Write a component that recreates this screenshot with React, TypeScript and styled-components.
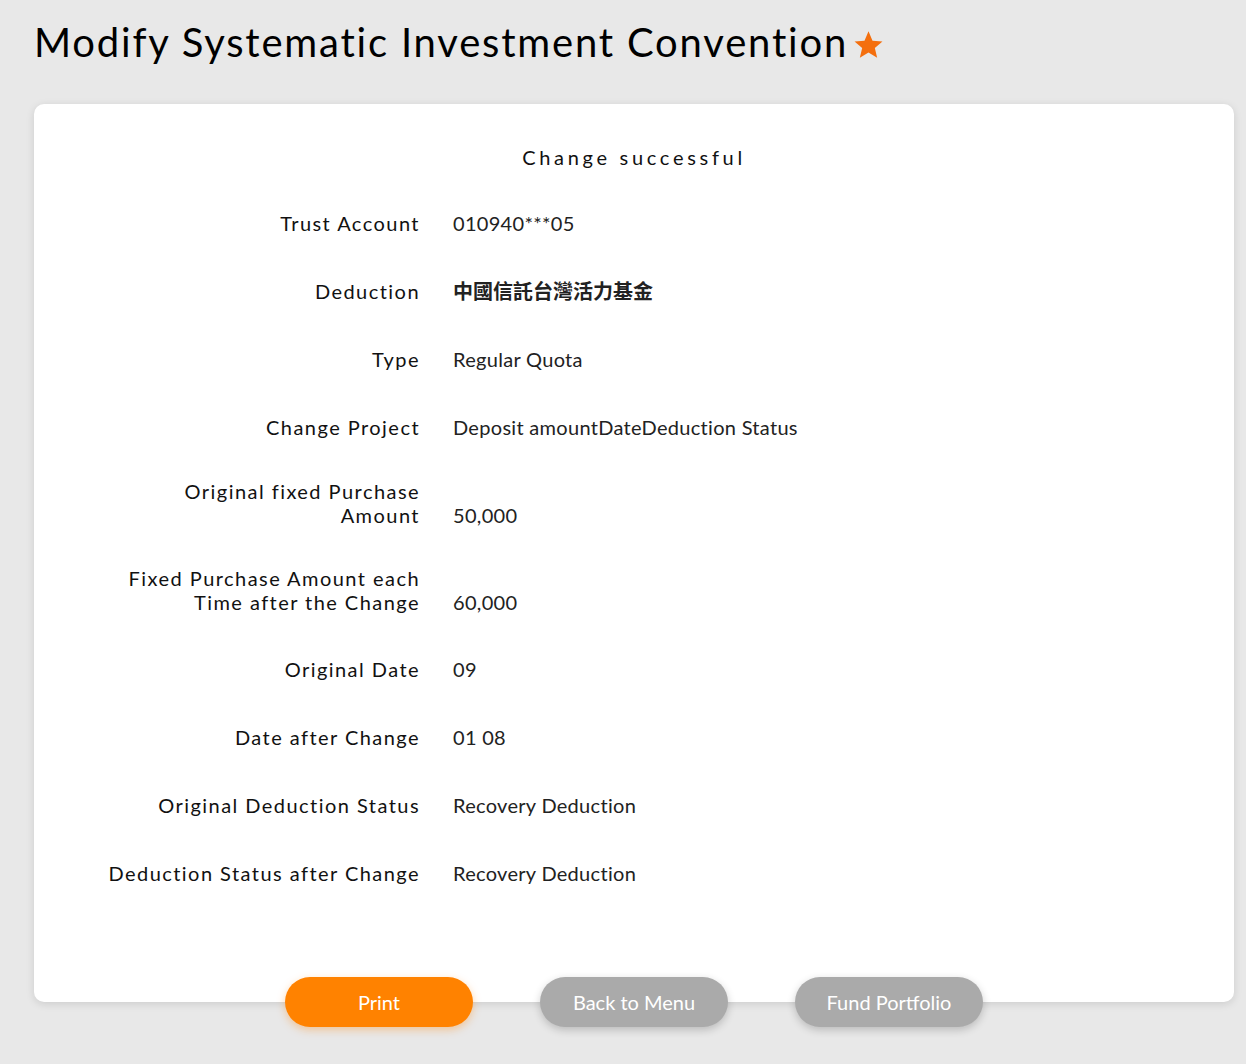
import React from 'react'
import styled, { createGlobalStyle } from 'styled-components'

const GlobalStyle = createGlobalStyle`
  html, body {
    margin: 0;
    padding: 0;
    background: #e8e8e8;
  }
  body {
    font-family: Lato, "Noto Sans CJK TC", sans-serif;
    color: #111;
  }
`

const rows: { label: React.ReactNode; value: React.ReactNode; cjk?: boolean; wrap?: boolean }[] = [
  { label: 'Trust Account', value: '010940***05' },
  { label: 'Deduction', value: '中國信託台灣活力基金', cjk: true },
  { label: 'Type', value: 'Regular Quota' },
  { label: 'Change Project', value: 'Deposit amountDateDeduction Status' },
  { label: <>Original fixed Purchase<br />Amount</>, value: '50,000', wrap: true },
  { label: <>Fixed Purchase Amount each<br />Time after the Change</>, value: '60,000', wrap: true },
  { label: 'Original Date', value: '09' },
  { label: 'Date after Change', value: '01 08' },
  { label: 'Original Deduction Status', value: 'Recovery Deduction' },
  { label: 'Deduction Status after Change', value: 'Recovery Deduction' },
]

const App = () => {
  return (
    <Page>
      <GlobalStyle />
      <Title>
        Modify Systematic Investment Convention
        <Star viewBox='0 0 24 24'>
          <path d='M12 1.8l3.1 7.2 7.7.6-5.9 5.1 1.8 7.6L12 18.2l-6.7 4.1 1.8-7.6-5.9-5.1 7.7-.6z' />
        </Star>
      </Title>

      <Card>
        <Status>Change successful</Status>
        <Table>
          {rows.map((row, i) => (
            <Row key={i} $wrap={row.wrap}>
              <Label $wrap={row.wrap}>{row.label}</Label>
              <Value $cjk={row.cjk} $wrap={row.wrap}>{row.value}</Value>
            </Row>
          ))}
        </Table>
        <Actions>
          <Button $variant='primary'>Print</Button>
          <Button>Back to Menu</Button>
          <Button>Fund Portfolio</Button>
        </Actions>
      </Card>
    </Page>
  )
}

const Page = styled.div`
  padding: 16px 12px 40px 34px;
`

const Title = styled.h1`
  margin: 0 0 36px;
  display: flex;
  align-items: center;
  font-size: 40px;
  font-weight: 400;
  line-height: 52px;
  color: #000;
  letter-spacing: 1.8px;
`

const Star = styled.svg`
  width: 31px;
  height: 31px;
  fill: #f46f0e;
  margin-left: 5px;
  margin-top: 4px;
`

const Card = styled.div`
  width: 1200px;
  background: #fff;
  border-radius: 10px;
  box-shadow: 0 2px 8px rgba(0, 0, 0, 0.12);
  padding-top: 40px;
  height: 858px;
  box-sizing: content-box;
  position: relative;
`

const Status = styled.div`
  text-align: center;
  font-size: 20px;
  letter-spacing: 3.7px;
  line-height: 26px;
`

const Table = styled.div`
  display: flex;
  flex-direction: column;
  margin-top: 19px;
`

const Row = styled.div<{ $wrap?: boolean }>`
  display: grid;
  grid-template-columns: 386px 1fr;
  column-gap: 33px;
  align-items: end;
  padding: ${({ $wrap }) => ($wrap ? '18px 0 21px' : '20px 0')};
`

const Label = styled.div<{ $wrap?: boolean }>`
  text-align: right;
  font-size: 20px;
  line-height: ${({ $wrap }) => ($wrap ? '24px' : '28px')};
  letter-spacing: 1.45px;
  color: #111;
`

const Value = styled.div<{ $cjk?: boolean; $wrap?: boolean }>`
  font-size: 20px;
  line-height: ${({ $wrap }) => ($wrap ? '24px' : '28px')};
  color: #222;
  letter-spacing: 0.3px;
  ${({ $cjk }) => $cjk && `
    font-family: "Noto Sans CJK TC", sans-serif;
    font-weight: 700;
    letter-spacing: 0;
  `}
`

const Actions = styled.div`
  position: absolute;
  left: 0;
  right: 0;
  bottom: -25px;
  display: flex;
  justify-content: center;
  gap: 67px;
`

const Button = styled.button<{ $variant?: 'primary' }>`
  width: 188px;
  height: 50px;
  border: none;
  border-radius: 25px;
  font-family: Lato, sans-serif;
  font-size: 20px;
  color: #fff;
  cursor: pointer;
  background: ${({ $variant }) => ($variant === 'primary' ? '#ff8200' : '#aaaaaa')};
  box-shadow: ${({ $variant }) =>
    $variant === 'primary' ? '0 3px 8px rgba(255, 130, 0, 0.35)' : '0 3px 8px rgba(0, 0, 0, 0.2)'};
`

export default App
